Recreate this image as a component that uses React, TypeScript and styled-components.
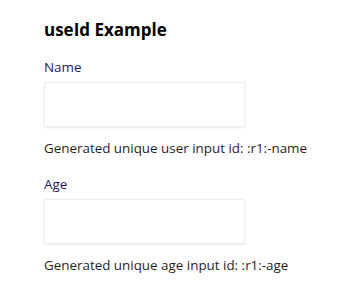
import React from 'react';
import styled, { createGlobalStyle } from 'styled-components';

const GlobalStyle = createGlobalStyle`
	body {
		margin: 0;
		background: #ffffff;
		font-family: 'Open Sans', 'Noto Sans', sans-serif;
		color: #1f1f1f;
	}
`;

const Page = styled.div`
	padding: 18px 0 0 44px;
`;

const Title = styled.h2`
	margin: 0 0 16px;
	font-size: 17px;
	font-weight: 700;
	color: #000000;
	line-height: 24px;
`;

const Field = styled.div`
	display: flex;
	flex-direction: column;
	align-items: flex-start;
	margin-bottom: 18px;
`;

const Label = styled.label`
	font-size: 13.4px;
	line-height: 18px;
	color: #1b1b5e;
	margin-bottom: 6px;
`;

const Input = styled.input`
	box-sizing: border-box;
	width: 201px;
	height: 45px;
	border: 1px solid #eeeeee;
	border-radius: 1px;
	box-shadow: 0 1px 3px rgba(0, 0, 0, 0.08);
	outline: none;
	padding: 0 10px;
	font: inherit;
`;

const Hint = styled.p`
	margin: 12px 0 0;
	font-size: 13.4px;
	line-height: 18px;
	color: #1f1f1f;
`;

interface FieldProps {
	label: string;
	id: string;
	kind: string;
}

const IdField: React.FunctionComponent<FieldProps> = ({ label, id, kind }) => (
	<Field>
		<Label htmlFor={id}>{label}</Label>
		<Input id={id} type="text" />
		<Hint>
			Generated unique {kind} input id: {id}
		</Hint>
	</Field>
);

export default function App() {
	return (
		<>
			<GlobalStyle />
			<Page>
				<Title>useId Example</Title>
				<IdField label="Name" id=":r1:-name" kind="user" />
				<IdField label="Age" id=":r1:-age" kind="age" />
			</Page>
		</>
	);
}
